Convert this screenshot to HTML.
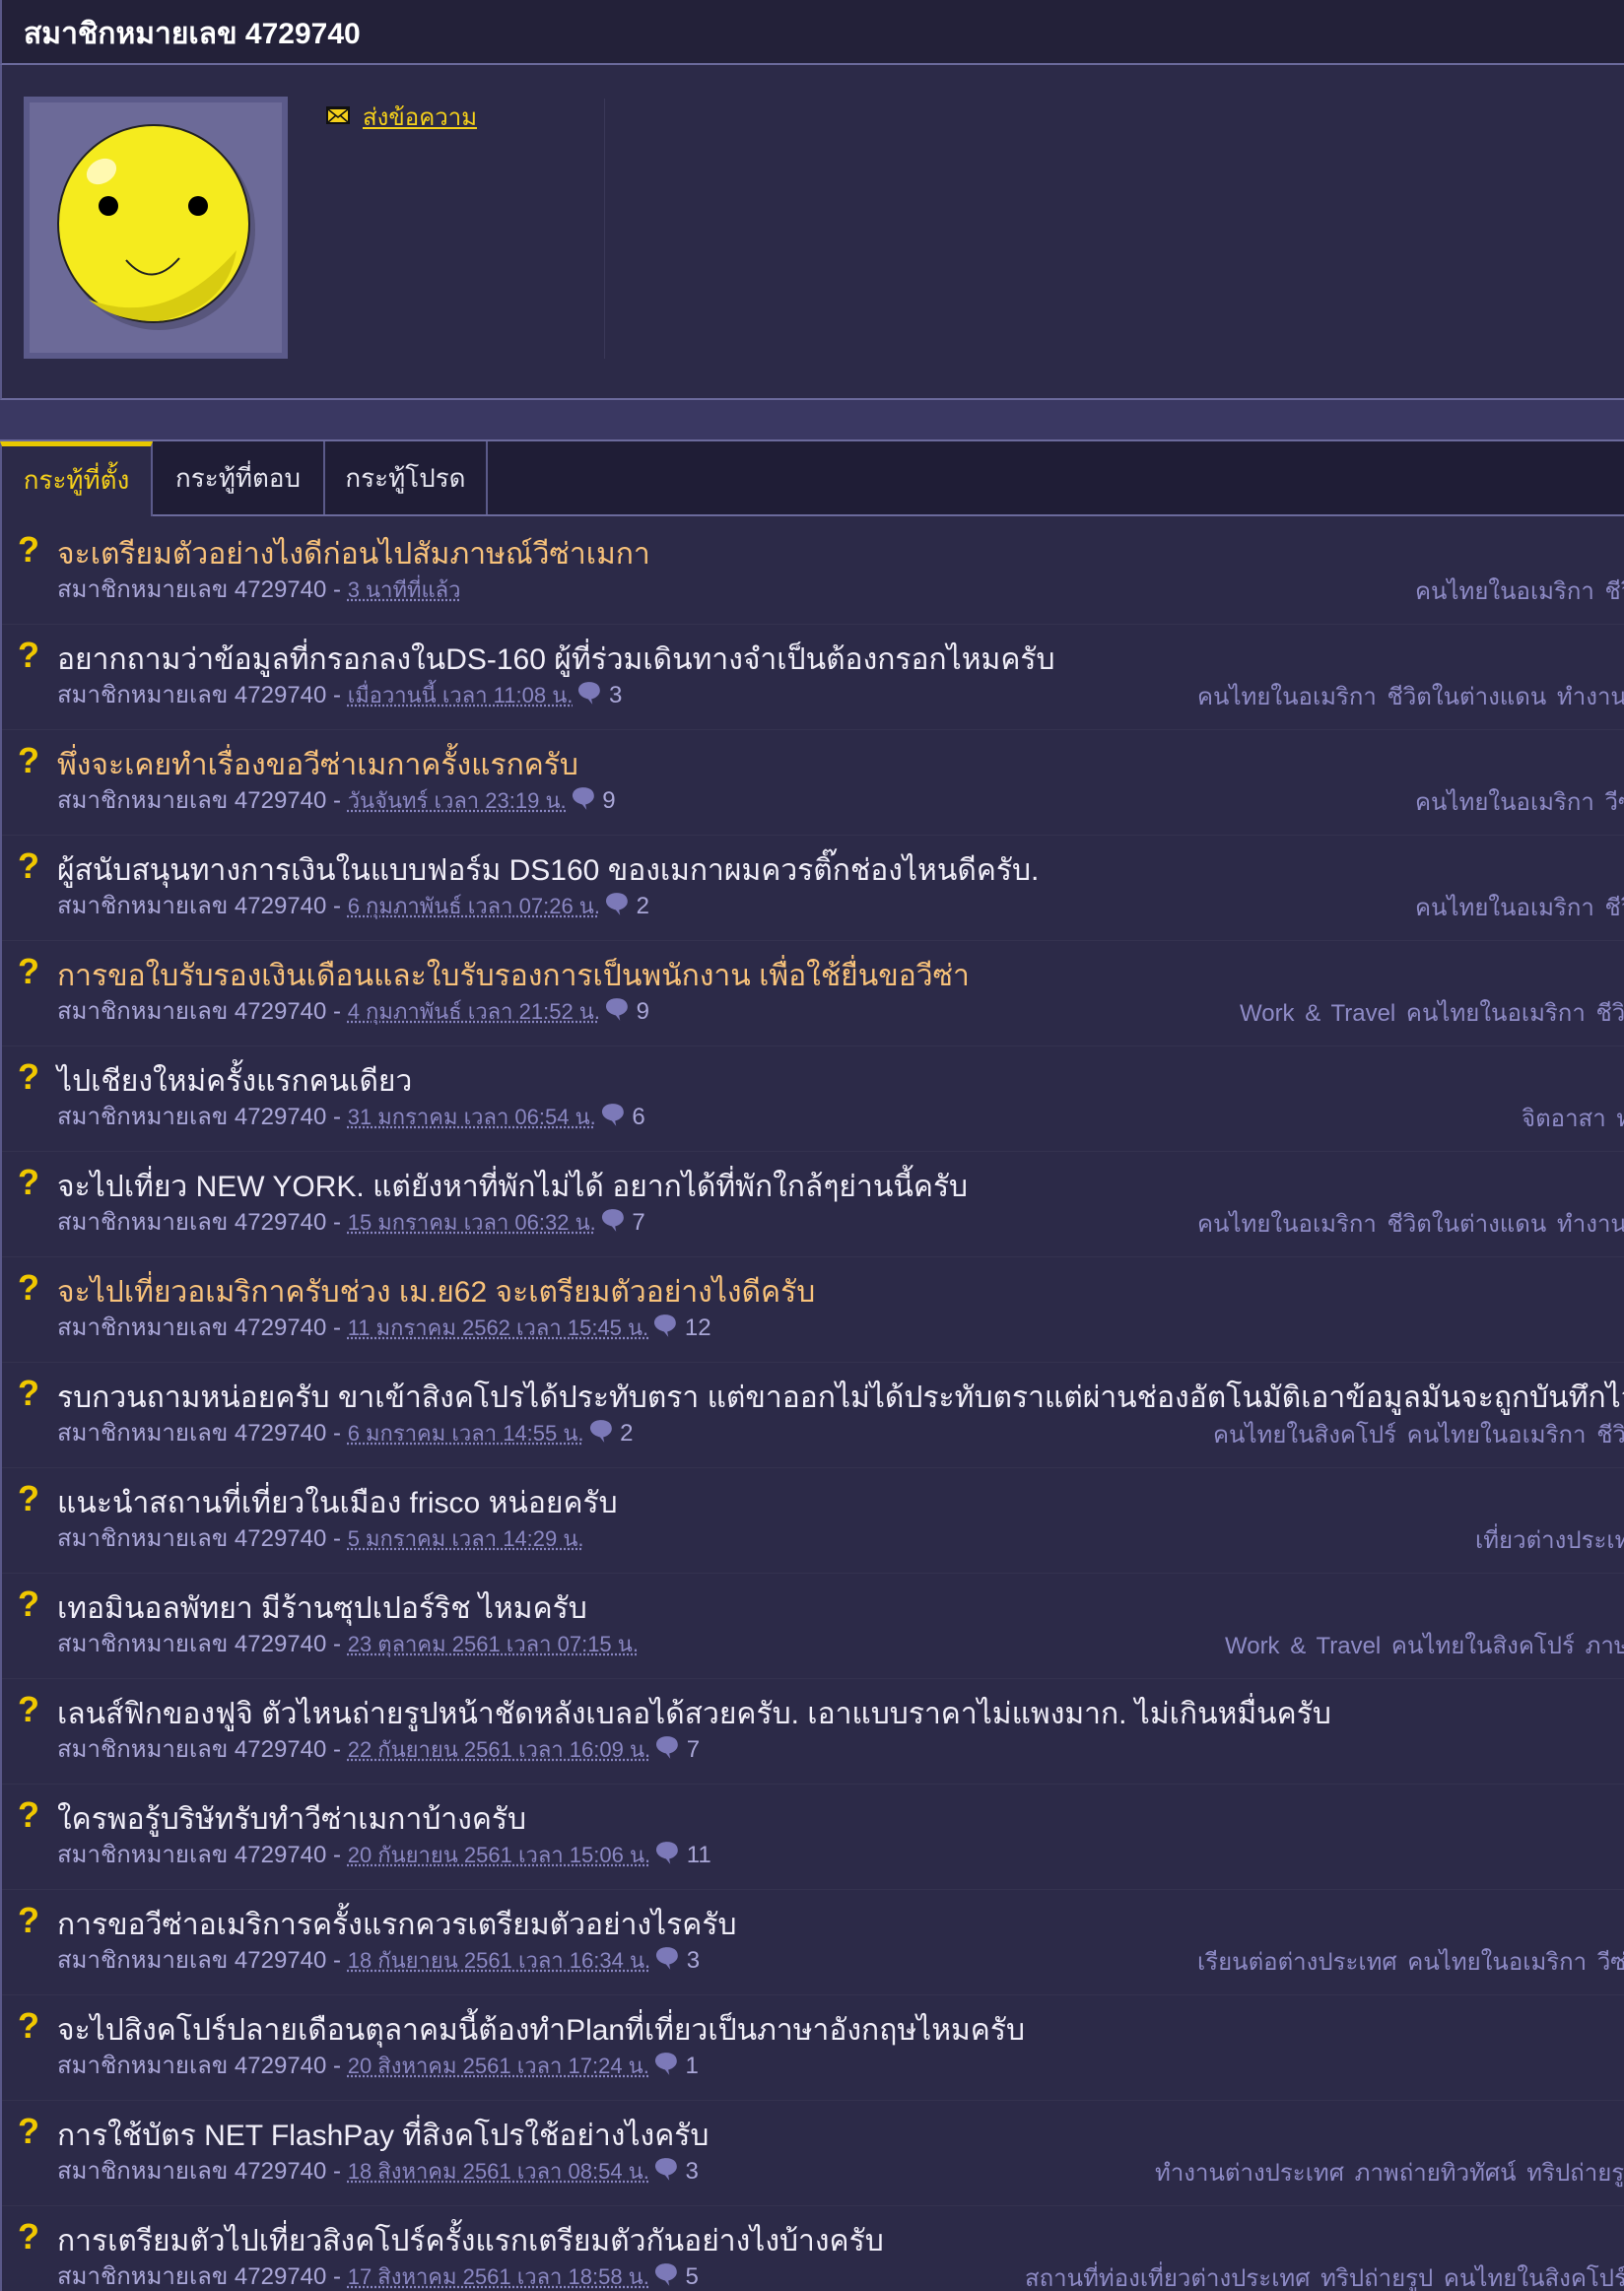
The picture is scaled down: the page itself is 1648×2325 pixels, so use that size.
<!DOCTYPE html>
<html><head><meta charset="utf-8">
<style>
*{margin:0;padding:0;box-sizing:border-box}
html,body{width:1648px;height:2325px;overflow:hidden;background:#2c2a48;font-family:"Liberation Sans",sans-serif}
.hdr{position:absolute;left:0;top:0;width:1648px;height:66px;background:#232139;border-left:2px solid #5a5888;border-bottom:2px solid #6b6a9c}
.hdr span{position:absolute;left:22px;top:11px;color:#fff;font-size:30px;font-weight:bold}
.prof{position:absolute;left:0;top:66px;width:1648px;height:340px;background:#2c2a48;border-left:2px solid #5a5888;border-bottom:2px solid #6b6a9c}
.av{position:absolute;left:22px;top:32px;width:268px;height:266px;background:#6c6a98;border:6px solid #5b5a8a}
.mail{position:absolute;left:329px;top:42px}
.send{position:absolute;left:366px;top:33px;color:#f5d01a;font-size:24px;text-decoration:underline}
.vdiv{position:absolute;left:611px;top:34px;width:1px;height:264px;background:#3a3858}
.band{position:absolute;left:0;top:406px;width:1648px;height:42px;background:#3a3862;border-bottom:2px solid #6b6a9c}
.tabs{position:absolute;left:0;top:448px;width:1648px;height:76px;background:#1f1d36;border-bottom:2px solid #6b6a9c}
.tab{position:absolute;top:0;height:74px;border-right:2px solid #5b5a8a;color:#e6e6f0;font-size:26px;text-align:center;line-height:74px}
.tab.a{background:#2c2a48;color:#f5d01a;border-top:5px solid #e8c800;height:76px;line-height:68px;border-left:2px solid #5a5888}
.list{position:absolute;left:0;top:524px;width:1648px;height:1801px;border-left:2px solid #5a5888;overflow:hidden}
.row{position:absolute;left:0;width:1648px;height:107px;border-bottom:1px solid #34324f}
.q{position:absolute;left:16px;top:10px;color:#f0c800;font-size:36px;font-weight:bold}
.t{position:absolute;left:56px;top:12px;font-size:30px;color:#f0eef8;white-space:nowrap}
.t.o{color:#f8c27a}
.m{position:absolute;left:56px;top:51px;font-size:24px;color:#aaa7d8;white-space:nowrap}
.m u{color:#8a87c2;text-decoration:underline dotted;font-size:22px}
.m svg{vertical-align:-3px;margin-left:4px}
.tg{position:absolute;top:53px;font-size:24px;color:#8e8bc6;white-space:nowrap;word-spacing:4px}
</style></head><body>
<div class="hdr"><span>สมาชิกหมายเลข 4729740</span></div>
<div class="prof">
 <div class="av"><svg width="256" height="254" viewBox="0 0 256 254">
  <ellipse cx="131" cy="129" rx="98" ry="102" fill="#000" opacity=".18"/>
  <ellipse cx="126" cy="123" rx="97" ry="100" fill="#f5eb1e" stroke="#222" stroke-width="2"/>
  <path d="M60 200 Q140 230 210 150 Q200 210 130 222 Q85 222 60 200z" fill="#d8cc10"/>
  <ellipse cx="73" cy="70" rx="16" ry="12" fill="#fff9b0" transform="rotate(-30 73 70)"/>
  <circle cx="80" cy="105" r="10" fill="#000"/><circle cx="171" cy="105" r="10" fill="#000"/>
  <path d="M98 160 Q124 190 152 158" fill="none" stroke="#222" stroke-width="2"/>
 </svg></div>
 <svg class="mail" width="24" height="18" viewBox="0 0 24 18"><rect width="24" height="18" fill="#111"/><rect x="2" y="3" width="20" height="13" fill="#f5d01a"/><path d="M2 3 L12 11 L22 3 M2 16 L10 9 M22 16 L14 9" stroke="#111" stroke-width="1.5" fill="none"/></svg>
 <span class="send">ส่งข้อความ</span>
 <div class="vdiv"></div>
</div>
<div class="band"></div>
<div class="tabs">
 <div class="tab a" style="left:0;width:155px">กระทู้ที่ตั้ง</div>
 <div class="tab" style="left:155px;width:175px">กระทู้ที่ตอบ</div>
 <div class="tab" style="left:330px;width:165px">กระทู้โปรด</div>
</div>
<div class="list" id="L">
<div class="row" style="top:3px"><span class="q">?</span><span class="t o">จะเตรียมตัวอย่างไงดีก่อนไปสัมภาษณ์วีซ่าเมกา</span><span class="m">สมาชิกหมายเลข 4729740 - <u>3 นาทีที่แล้ว</u></span><span class="tg" style="left:1434px">คนไทยในอเมริกา ชีวิตในต่างแดน</span></div>
<div class="row" style="top:110px"><span class="q">?</span><span class="t">อยากถามว่าข้อมูลที่กรอกลงในDS-160 ผู้ที่ร่วมเดินทางจำเป็นต้องกรอกไหมครับ</span><span class="m">สมาชิกหมายเลข 4729740 - <u>เมื่อวานนี้ เวลา 11:08 น.</u><svg width="26" height="26" viewBox="0 0 24 24"><path d="M12 2C5 2 1 6 2 11c1 4 5 6 9 7l4 5-1-5c4-1 8-4 8-8 0-5-4-8-10-8z" fill="#7c79b8"/></svg> 3</span><span class="tg" style="left:1213px">คนไทยในอเมริกา ชีวิตในต่างแดน ทำงานต่างประเทศ</span></div>
<div class="row" style="top:217px"><span class="q">?</span><span class="t o">พึ่งจะเคยทำเรื่องขอวีซ่าเมกาครั้งแรกครับ</span><span class="m">สมาชิกหมายเลข 4729740 - <u>วันจันทร์ เวลา 23:19 น.</u><svg width="26" height="26" viewBox="0 0 24 24"><path d="M12 2C5 2 1 6 2 11c1 4 5 6 9 7l4 5-1-5c4-1 8-4 8-8 0-5-4-8-10-8z" fill="#7c79b8"/></svg> 9</span><span class="tg" style="left:1434px">คนไทยในอเมริกา วีซ่า</span></div>
<div class="row" style="top:324px"><span class="q">?</span><span class="t">ผู้สนับสนุนทางการเงินในแบบฟอร์ม DS160 ของเมกาผมควรติ๊กช่องไหนดีครับ.</span><span class="m">สมาชิกหมายเลข 4729740 - <u>6 กุมภาพันธ์ เวลา 07:26 น.</u><svg width="26" height="26" viewBox="0 0 24 24"><path d="M12 2C5 2 1 6 2 11c1 4 5 6 9 7l4 5-1-5c4-1 8-4 8-8 0-5-4-8-10-8z" fill="#7c79b8"/></svg> 2</span><span class="tg" style="left:1434px">คนไทยในอเมริกา ชีวิตในต่างแดน</span></div>
<div class="row" style="top:431px"><span class="q">?</span><span class="t o">การขอใบรับรองเงินเดือนและใบรับรองการเป็นพนักงาน เพื่อใช้ยื่นขอวีซ่า</span><span class="m">สมาชิกหมายเลข 4729740 - <u>4 กุมภาพันธ์ เวลา 21:52 น.</u><svg width="26" height="26" viewBox="0 0 24 24"><path d="M12 2C5 2 1 6 2 11c1 4 5 6 9 7l4 5-1-5c4-1 8-4 8-8 0-5-4-8-10-8z" fill="#7c79b8"/></svg> 9</span><span class="tg" style="left:1256px">Work &amp; Travel คนไทยในอเมริกา ชีวิตในต่างแดน</span></div>
<div class="row" style="top:538px"><span class="q">?</span><span class="t">ไปเชียงใหม่ครั้งแรกคนเดียว</span><span class="m">สมาชิกหมายเลข 4729740 - <u>31 มกราคม เวลา 06:54 น.</u><svg width="26" height="26" viewBox="0 0 24 24"><path d="M12 2C5 2 1 6 2 11c1 4 5 6 9 7l4 5-1-5c4-1 8-4 8-8 0-5-4-8-10-8z" fill="#7c79b8"/></svg> 6</span><span class="tg" style="left:1542px">จิตอาสา ท่องเที่ยว</span></div>
<div class="row" style="top:645px"><span class="q">?</span><span class="t">จะไปเที่ยว NEW YORK. แต่ยังหาที่พักไม่ได้ อยากได้ที่พักใกล้ๆย่านนี้ครับ</span><span class="m">สมาชิกหมายเลข 4729740 - <u>15 มกราคม เวลา 06:32 น.</u><svg width="26" height="26" viewBox="0 0 24 24"><path d="M12 2C5 2 1 6 2 11c1 4 5 6 9 7l4 5-1-5c4-1 8-4 8-8 0-5-4-8-10-8z" fill="#7c79b8"/></svg> 7</span><span class="tg" style="left:1213px">คนไทยในอเมริกา ชีวิตในต่างแดน ทำงานต่างประเทศ</span></div>
<div class="row" style="top:752px"><span class="q">?</span><span class="t o">จะไปเที่ยวอเมริกาครับช่วง เม.ย62 จะเตรียมตัวอย่างไงดีครับ</span><span class="m">สมาชิกหมายเลข 4729740 - <u>11 มกราคม 2562 เวลา 15:45 น.</u><svg width="26" height="26" viewBox="0 0 24 24"><path d="M12 2C5 2 1 6 2 11c1 4 5 6 9 7l4 5-1-5c4-1 8-4 8-8 0-5-4-8-10-8z" fill="#7c79b8"/></svg> 12</span></div>
<div class="row" style="top:859px"><span class="q">?</span><span class="t">รบกวนถามหน่อยครับ ขาเข้าสิงคโปรได้ประทับตรา แต่ขาออกไม่ได้ประทับตราแต่ผ่านช่องอัตโนมัติเอาข้อมูลมันจะถูกบันทึกไว้ไหมครับ</span><span class="m">สมาชิกหมายเลข 4729740 - <u>6 มกราคม เวลา 14:55 น.</u><svg width="26" height="26" viewBox="0 0 24 24"><path d="M12 2C5 2 1 6 2 11c1 4 5 6 9 7l4 5-1-5c4-1 8-4 8-8 0-5-4-8-10-8z" fill="#7c79b8"/></svg> 2</span><span class="tg" style="left:1229px">คนไทยในสิงคโปร์ คนไทยในอเมริกา ชีวิตในต่างแดน</span></div>
<div class="row" style="top:966px"><span class="q">?</span><span class="t">แนะนำสถานที่เที่ยวในเมือง frisco หน่อยครับ</span><span class="m">สมาชิกหมายเลข 4729740 - <u>5 มกราคม เวลา 14:29 น.</u></span><span class="tg" style="left:1495px">เที่ยวต่างประเทศ</span></div>
<div class="row" style="top:1073px"><span class="q">?</span><span class="t">เทอมินอลพัทยา มีร้านซุปเปอร์ริช ไหมครับ</span><span class="m">สมาชิกหมายเลข 4729740 - <u>23 ตุลาคม 2561 เวลา 07:15 น.</u></span><span class="tg" style="left:1241px">Work &amp; Travel คนไทยในสิงคโปร์ ภาษาอังกฤษ</span></div>
<div class="row" style="top:1180px"><span class="q">?</span><span class="t">เลนส์ฟิกของฟูจิ ตัวไหนถ่ายรูปหน้าชัดหลังเบลอได้สวยครับ. เอาแบบราคาไม่แพงมาก. ไม่เกินหมื่นครับ</span><span class="m">สมาชิกหมายเลข 4729740 - <u>22 กันยายน 2561 เวลา 16:09 น.</u><svg width="26" height="26" viewBox="0 0 24 24"><path d="M12 2C5 2 1 6 2 11c1 4 5 6 9 7l4 5-1-5c4-1 8-4 8-8 0-5-4-8-10-8z" fill="#7c79b8"/></svg> 7</span></div>
<div class="row" style="top:1287px"><span class="q">?</span><span class="t">ใครพอรู้บริษัทรับทำวีซ่าเมกาบ้างครับ</span><span class="m">สมาชิกหมายเลข 4729740 - <u>20 กันยายน 2561 เวลา 15:06 น.</u><svg width="26" height="26" viewBox="0 0 24 24"><path d="M12 2C5 2 1 6 2 11c1 4 5 6 9 7l4 5-1-5c4-1 8-4 8-8 0-5-4-8-10-8z" fill="#7c79b8"/></svg> 11</span></div>
<div class="row" style="top:1394px"><span class="q">?</span><span class="t">การขอวีซ่าอเมริการครั้งแรกควรเตรียมตัวอย่างไรครับ</span><span class="m">สมาชิกหมายเลข 4729740 - <u>18 กันยายน 2561 เวลา 16:34 น.</u><svg width="26" height="26" viewBox="0 0 24 24"><path d="M12 2C5 2 1 6 2 11c1 4 5 6 9 7l4 5-1-5c4-1 8-4 8-8 0-5-4-8-10-8z" fill="#7c79b8"/></svg> 3</span><span class="tg" style="left:1213px">เรียนต่อต่างประเทศ คนไทยในอเมริกา วีซ่า</span></div>
<div class="row" style="top:1501px"><span class="q">?</span><span class="t">จะไปสิงคโปร์ปลายเดือนตุลาคมนี้ต้องทำPlanที่เที่ยวเป็นภาษาอังกฤษไหมครับ</span><span class="m">สมาชิกหมายเลข 4729740 - <u>20 สิงหาคม 2561 เวลา 17:24 น.</u><svg width="26" height="26" viewBox="0 0 24 24"><path d="M12 2C5 2 1 6 2 11c1 4 5 6 9 7l4 5-1-5c4-1 8-4 8-8 0-5-4-8-10-8z" fill="#7c79b8"/></svg> 1</span></div>
<div class="row" style="top:1608px"><span class="q">?</span><span class="t">การใช้บัตร NET FlashPay ที่สิงคโปรใช้อย่างไงครับ</span><span class="m">สมาชิกหมายเลข 4729740 - <u>18 สิงหาคม 2561 เวลา 08:54 น.</u><svg width="26" height="26" viewBox="0 0 24 24"><path d="M12 2C5 2 1 6 2 11c1 4 5 6 9 7l4 5-1-5c4-1 8-4 8-8 0-5-4-8-10-8z" fill="#7c79b8"/></svg> 3</span><span class="tg" style="left:1170px">ทำงานต่างประเทศ ภาพถ่ายทิวทัศน์ ทริปถ่ายรูป</span></div>
<div class="row" style="top:1715px"><span class="q">?</span><span class="t">การเตรียมตัวไปเที่ยวสิงคโปร์ครั้งแรกเตรียมตัวกันอย่างไงบ้างครับ</span><span class="m">สมาชิกหมายเลข 4729740 - <u>17 สิงหาคม 2561 เวลา 18:58 น.</u><svg width="26" height="26" viewBox="0 0 24 24"><path d="M12 2C5 2 1 6 2 11c1 4 5 6 9 7l4 5-1-5c4-1 8-4 8-8 0-5-4-8-10-8z" fill="#7c79b8"/></svg> 5</span><span class="tg" style="left:1038px">สถานที่ท่องเที่ยวต่างประเทศ ทริปถ่ายรูป คนไทยในสิงคโปร์</span></div>
</div>
</body></html>
